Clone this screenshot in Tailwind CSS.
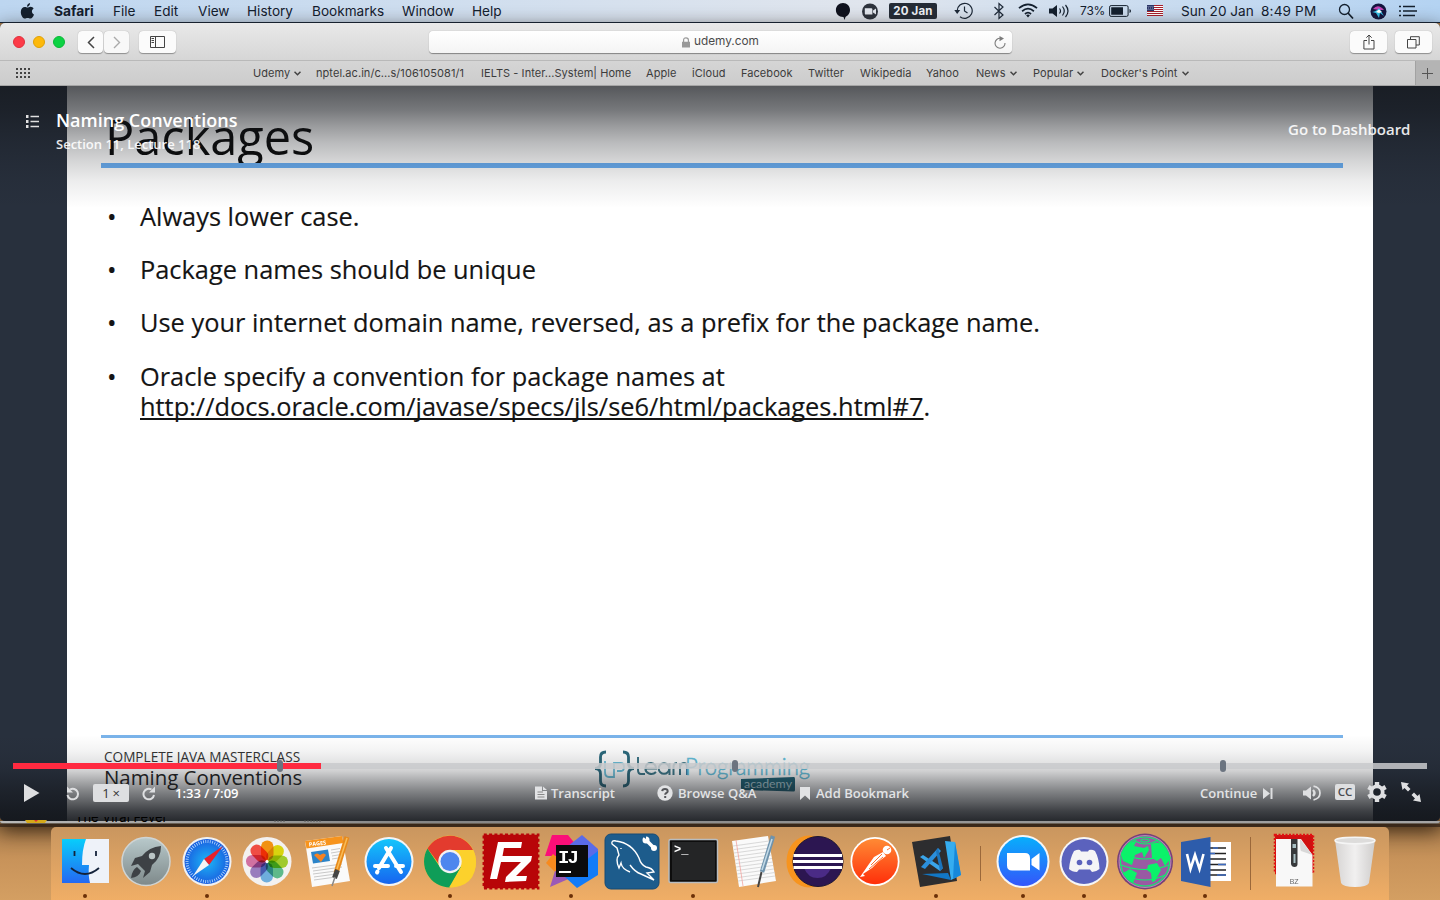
<!DOCTYPE html>
<html lang="en">
<head>
<meta charset="utf-8">
<title>Naming Conventions</title>
<script src="https://cdn.jsdelivr.net/npm/@tailwindcss/browser@4"></script>
</head>
<body class="w-[1440px] h-[900px] overflow-hidden bg-[#cf9c60] font-['Inter','Liberation_Sans',sans-serif]">
<div class="relative w-[1440px] h-[900px] flex flex-col bg-[linear-gradient(to_bottom,#a87c4c_820px,#c8935a_860px,#d49f62_900px)] overflow-hidden">

<!-- Menu bar -->
<header class="h-[23px] shrink-0 flex items-center border-b border-[#17273a] text-[13.6px] text-[#14202e] whitespace-nowrap bg-linear-to-r from-[#bdd6f0] via-[#e0e5ed] via-60% to-[#b4d3f2]">
  <div class="w-[54px] pl-[20px]"><svg width="15" height="18" viewBox="0 0 15 18"><path fill="#14202e" d="M10 1C10.2 3 8.700 4.700 7 4.700 6.800 3 8.300 1.200 10 1ZM7.400 5.600C8.200 5.600 9.200 4.800 10.600 4.800 11.900 4.900 13 5.500 13.600 6.400 11.200 8 11.500 11.300 14 12.400 13.400 14.200 11.900 16.600 10.400 16.600 9.300 16.600 8.900 16 7.600 16 6.300 16 5.900 16.600 4.800 16.600 2.900 16.600.8 13.100.8 9.900.8 6.800 2.800 5 4.800 5 6 5 6.800 5.600 7.400 5.600Z"/></svg></div>
  <span class="w-[59px] font-bold text-[13.8px]">Safari</span><span class="w-[41px]">File</span><span class="w-[44px]">Edit</span><span class="w-[49px]">View</span><span class="w-[65px]">History</span><span class="w-[90px]">Bookmarks</span><span class="w-[70px]">Window</span><span class="w-[363px]">Help</span>
  <div class="w-[27px]"><svg width="16" height="20" viewBox="0 0 16 20"><path fill="#10131f" d="M8 2C12 2 15 5 15 9 15 13 12 15 10.500 16L9.500 19 8.500 16C4 16.200.9 13 .9 9 .9 5 4 2 8 2Z"/></svg></div>
  <div class="w-[27px]"><svg width="17" height="17" viewBox="0 0 17 17"><circle cx="8" cy="8.500" r="8" fill="#2e333d"/><path fill="#e3e7ee" d="M2.800 5.200H9.200Q10.400 5.200 10.400 6.400V11.600H4Q2.800 11.600 2.800 10.400ZM11 7.600 14 5.600V11.400L11 9.400Z"/></svg></div>
  <span class="w-[48px] h-[16px] rounded-[2px] bg-[#252c37] text-[#eef1f6] font-bold text-[11.5px] leading-[16px] text-center tracking-[.2px]">20 Jan</span>
  <div class="w-[56px] pl-[17px]"><svg width="19" height="18" viewBox="0 0 19 18" fill="none" stroke="#1d2938" stroke-width="1.200"><path d="M3.200 9A7.500 7.500 0 1 1 6 14.700" /><path d="M10.500 4.500V9L13.500 11" /><path fill="#1d2938" stroke="none" d="M.3 8H6.200L3.200 12Z"/></svg></div>
  <div class="w-[25px]"><svg width="12" height="18" viewBox="0 0 12 18" fill="none" stroke="#1d2938" stroke-width="1.200"><path d="M1.500 5 10 13 6 16.500V1.500L10 5 1.500 13"/></svg></div>
  <div class="w-[31px] -mt-[2px]"><svg width="20" height="16" viewBox="0 0 21 16" fill="none" stroke="#14202e" stroke-width="1.800"><path d="M1 6Q10.500-2 20 6M4.300 9.300Q10.500 4 16.700 9.300M7.300 12.200Q10.500 9.500 13.700 12.200"/><path fill="#14202e" stroke="none" d="M10.500 16 8.500 13.500Q10.500 12 12.500 13.500Z"/></svg></div>
  <div class="w-[31px]"><svg width="22" height="16" viewBox="0 0 22 16" fill="none" stroke="#14202e" stroke-width="1.200"><path fill="#14202e" stroke="none" d="M0 5.500H3.500L8 2V14L3.500 10.500H0Z"/><path d="M10.500 5.500Q12.500 8 10.500 10.500M13.500 3.500Q17 8 13.500 12.500M16.500 2Q21.500 8 16.500 14"/></svg></div>
  <span class="w-[29px] text-[12px] tracking-[-.2px]">73%</span>
  <div class="w-[38px]"><svg width="23" height="12" viewBox="0 0 23 12"><rect x=".6" y=".6" width="18.500" height="10.800" rx="1.500" fill="none" stroke="#14202e"/><path fill="#14202e" d="M2.200 2.200H14V9.800H2.200ZM20.500 4Q22 4.500 22 6T20.500 8Z"/></svg></div>
  <div class="w-[34px] -mt-[1px]"><svg width="16" height="11" viewBox="0 0 16 11"><path fill="#fff" d="M0 0H16V11H0Z"/><path stroke="#a8202c" d="M0 .5H16M0 2.500H16M0 4.500H16M0 6.500H16M0 8.500H16M0 10.500H16"/><path fill="#2b3768" d="M0 0H7V6H0Z"/><path stroke="#aeb5d6" stroke-width=".7" stroke-dasharray="1 1" d="M.5 1.500H7M1 3H7M.5 4.500H7"/></svg></div>
  <span class="w-[80px]">Sun 20 Jan</span><span class="w-[77px] tracking-[.15px]">8:49 PM</span>
  <div class="w-[32px]"><svg width="16" height="16" viewBox="0 0 16 16" fill="none" stroke="#14202e" stroke-width="1.300"><circle cx="6.500" cy="6.500" r="5"/><path stroke-width="1.700" d="M10 10 15 15.500"/></svg></div>
  <div class="w-[28px]"><svg width="17" height="17" viewBox="0 0 17 17"><circle cx="8.500" cy="8.500" r="8" fill="#151640"/><path fill="#c344b5" d="M3 6Q8 0 14 7L9 7Z"/><path fill="#35bfe8" d="M2 9Q7 8 9 5L14 13 10 10 9 15 6 10Z"/><path fill="#fff" d="M6 9 9 6.500 12 9 9 10Z"/></svg></div>
  <svg width="19" height="12" viewBox="0 0 19 12"><path stroke="#14202e" stroke-width="1.600" d="M1 1.500H3M5 1.500H17M1 6H3M5 6H19M1 10.500H3M5 10.500H17"/></svg>
</header>

<!-- Safari window -->
<section class="relative h-[798px] shrink-0 flex flex-col rounded-t-[5px] rounded-b-[5px] overflow-hidden bg-[#28303d] z-10 shadow-[0_8px_20px_2px_rgba(25,14,4,.8)]">
  <div class="h-[38px] shrink-0 flex items-center border-b border-[#b9b9b9] bg-linear-to-b from-[#e9e9e9] to-[#d6d6d6] pr-[8px] pt-px">
    <div class="flex gap-[8px] pl-[13px] w-[78px]">
      <i class="size-[12px] rounded-full bg-[#fc3b48] border border-[#e0303c]"></i><i class="size-[12px] rounded-full bg-[#fdb90b] border border-[#e0a106]"></i><i class="size-[12px] rounded-full bg-[#0cd243] border border-[#0ab838]"></i>
    </div>
    <div class="flex gap-[1px] w-[61px]">
      <div class="w-[25px] h-[22px] rounded-[4px] bg-[#fbfbfb] shadow-[0_.5px_1px_rgba(0,0,0,.35)] flex items-center justify-center"><svg width="8" height="13" viewBox="0 0 8 13" fill="none" stroke="#444" stroke-width="1.500"><path d="M7 1 1.500 6.500 7 12"/></svg></div>
      <div class="w-[25px] h-[22px] rounded-[4px] bg-[#f8f8f8] shadow-[0_.5px_1px_rgba(0,0,0,.35)] flex items-center justify-center"><svg width="8" height="13" viewBox="0 0 8 13" fill="none" stroke="#aaa" stroke-width="1.400"><path d="M1 1 6.500 6.500 1 12"/></svg></div>
    </div>
    <div class="w-[37px] h-[22px] rounded-[4px] bg-[#fbfbfb] shadow-[0_.5px_1px_rgba(0,0,0,.35)] flex items-center justify-center"><svg width="15" height="12" viewBox="0 0 15 12" fill="none" stroke="#444"><path d="M.5.5H14.500V11.500H.5ZM5.500.5V11.500M1.500 2.500H4M1.500 4.500H4M1.500 6.500H4"/></svg></div>
    <div class="ml-[253px] w-[583px] h-[22px] rounded-[4px] bg-linear-to-b from-white to-[#f4f4f4] shadow-[0_.5px_1px_rgba(0,0,0,.4)] flex items-center">
      <div class="ml-[253px] w-[12px]"><svg width="8" height="11" viewBox="0 0 8 11"><path fill="#999" d="M0 4.800H8V10.500H0Z"/><path fill="none" stroke="#999" stroke-width="1.200" d="M1.600 5V3Q1.600.8 4 .8T6.400 3V5"/></svg></div>
      <span class="w-[300px] text-[11.8px] text-[#4a4a4a]">udemy.com</span>
      <svg width="12" height="13" viewBox="0 0 12 13" fill="none" stroke="#7c7c7c" stroke-width="1.100"><path d="M6.500 2.300A5 5 0 1 0 11 7"/><path fill="#7c7c7c" stroke="none" d="M5.500 0 10 2.400 5.500 5.200Z"/></svg>
    </div>
    <div class="ml-auto flex gap-[8px]">
      <div class="w-[37px] h-[22px] rounded-[4px] bg-[#fbfbfb] shadow-[0_.5px_1px_rgba(0,0,0,.35)] flex items-center justify-center"><svg width="12" height="16" viewBox="0 0 12 16" fill="none" stroke="#444"><path d="M4 6.500H.9V15H11V6.500H8M6 10.500V1M3.300 3.700 6 1 8.700 3.700"/></svg></div>
      <div class="w-[37px] h-[22px] rounded-[4px] bg-[#fbfbfb] shadow-[0_.5px_1px_rgba(0,0,0,.35)] flex items-center justify-center"><svg width="13" height="13" viewBox="0 0 13 13" fill="none" stroke="#444"><path d="M.5 3.500H9V12H.5ZM3.500 3.500V.7H12.300V9H9"/></svg></div>
    </div>
  </div>
  <nav class="h-[25px] shrink-0 flex items-center border-b border-[#a5a5a5] bg-linear-to-b from-[#d5d5d5] to-[#cccccc] text-[11px] tracking-[.06px] text-[#3c3c3c] whitespace-nowrap">
    <div class="w-[253px] pl-[16px]"><svg width="15" height="10" viewBox="0 0 15 10"><path stroke="#444" stroke-width="2" stroke-dasharray="2 2" d="M0 1H15M0 5H15M0 9H15"/></svg></div>
    <span class="w-[63px] flex items-center gap-[4px]">Udemy<svg width="7" height="5" viewBox="0 0 7 5" fill="none" stroke="#444" stroke-width="1.500"><path d="M.5.7 3.500 3.700 6.500.7"/></svg></span>
    <span class="w-[165px]">nptel.ac.in/c...s/106105081/1</span><span class="w-[165px]">IELTS - Inter...System| Home</span><span class="w-[46px]">Apple</span><span class="w-[49px]">iCloud</span><span class="w-[67px]">Facebook</span><span class="w-[52px]">Twitter</span><span class="w-[66px]">Wikipedia</span><span class="w-[50px]">Yahoo</span>
    <span class="w-[57px] flex items-center gap-[4px]">News<svg width="7" height="5" viewBox="0 0 7 5" fill="none" stroke="#444" stroke-width="1.500"><path d="M.5.7 3.500 3.700 6.500.7"/></svg></span>
    <span class="w-[68px] flex items-center gap-[4px]">Popular<svg width="7" height="5" viewBox="0 0 7 5" fill="none" stroke="#444" stroke-width="1.500"><path d="M.5.7 3.500 3.700 6.500.7"/></svg></span>
    <span class="flex items-center gap-[4px]">Docker's Point<svg width="7" height="5" viewBox="0 0 7 5" fill="none" stroke="#444" stroke-width="1.500"><path d="M.5.7 3.500 3.700 6.500.7"/></svg></span>
    <div class="ml-auto w-[25px] h-full bg-[#b4b4b4] border-l border-[#a2a2a2] flex items-center justify-center pr-[2px]"><svg width="11" height="11" viewBox="0 0 11 11"><path stroke="#555" d="M5.500 0V11M0 5.500H11"/></svg></div>
  </nav>

  <main class="relative h-[735px] px-[67px] bg-[#28303d] font-['Open_Sans','Noto_Sans',sans-serif]">
    <!-- Slide -->
    <article class="h-full bg-white text-[#0a0a0a] pl-[34px] pr-[30px] flex flex-col whitespace-nowrap">
      <h1 class="h-[77px] pl-[4px] pt-[17px] text-[48.700px] leading-[66px] overflow-hidden">Packages</h1>
      <div class="h-[5px] bg-[#6aaff4] shrink-0"></div>
      <ul class="pt-[33px] h-[567px] shrink-0 text-[25.380px] leading-[30px] text-[#141414] [-webkit-text-stroke:.15px_#141414]">
        <li class="flex h-[53px]"><span class="w-[39px] pl-[6px]">•</span>Always lower case.</li>
        <li class="flex h-[53px]"><span class="w-[39px] pl-[6px]">•</span>Package names should be unique</li>
        <li class="flex h-[54px]"><span class="w-[39px] pl-[6px]">•</span>Use your internet domain name, reversed, as a prefix for the package name.</li>
        <li class="flex"><span class="w-[39px] pl-[6px]">•</span><span>Oracle specify a convention for package names at<br><span class="underline decoration-[1.500px] underline-offset-[2px] [text-decoration-skip-ink:none]">http://docs.oracle.com/javase/specs/jls/se6/html/packages.html#7</span>.</span></li>
      </ul>
      <div class="h-[3px] bg-[#7ab3ea] shrink-0"></div>
      <footer class="flex pl-[3px]">
        <div class="w-[491px] pt-[10px]">
          <p class="text-[13.600px] leading-[18px] text-[#333]">COMPLETE JAVA MASTERCLASS</p>
          <p class="text-[20.400px] leading-[22px] text-[#222]">Naming Conventions</p>
        </div>
        <svg class="mt-[10px]" width="220" height="48" viewBox="0 0 220 48" fill="none">
          <path stroke="#2b6a7d" stroke-width="2.800" d="M11 4Q5.500 4 5.500 9V15Q5.500 20.500 0 20.500 5.500 20.500 5.500 26V33Q5.500 38 11 38M28 4Q33.500 4 33.500 9V15Q33.500 20.500 39 20.500 33.500 20.500 33.500 26V33Q33.500 38 28 38"/>
          <path stroke="#6cc0da" stroke-width="1.800" d="M10 13V24Q10 29 14 29H19V15H26Q29 15 29 19T26 23H22"/>
          <g fill="none" stroke-width="2"><path stroke="#3c7687" d="M43 9V22Q43 26 46 26H50M61 24Q58 27 54 25.500 50 24 50.500 20 51 15 56 15 61 15.500 61 20.500H51"/><circle cx="69" cy="20.500" r="5.300" stroke="#3c7687"/><path stroke="#3c7687" d="M74.500 15V27M78.500 27V19Q78.500 15 82 15M85 27V15M85 19Q86 15 89 15 92 15 92 19V27"/></g>
          <text x="90" y="27" font-family="Lato" font-weight="300" font-size="24" textLength="125" lengthAdjust="spacingAndGlyphs" fill="#63c0dc" stroke="#63c0dc" stroke-width=".5">Programming</text>
          <path fill="#1f6478" d="M146 31 199 29Q200 29 200 31V42Q200 44 198 43.500L148 42Q146 42 146 40Z"/>
          <text x="149" y="39.500" font-family="Lato" font-size="12" textLength="48" lengthAdjust="spacingAndGlyphs" fill="#b4d3dc">academy</text>
        </svg>
      </footer>
    </article>

    <!-- Player overlay -->
    <div class="absolute inset-0 flex flex-col justify-between text-white/90 font-semibold whitespace-nowrap">
      <div class="h-[124px] pt-[21px] flex items-start bg-[linear-gradient(to_bottom,rgba(20,23,28,.72)_0px,rgba(20,23,28,.58)_24px,rgba(20,23,28,.43)_40px,rgba(20,23,28,.29)_57px,rgba(20,23,28,.18)_75px,rgba(20,23,28,.08)_95px,rgba(20,23,28,0)_122px)]">
        <div class="w-[56px] pl-[26px] pt-[8px]"><svg width="13" height="13" viewBox="0 0 13 13"><path stroke="#e0e0e0" stroke-width="1.300" d="M4.500 1.500H13M4.500 6.500H13M4.500 11.500H13"/><path stroke="#e0e0e0" stroke-width="3" d="M0 1.500H2.500M0 6.500H2.500M0 11.500H2.500"/></svg></div>
        <div class="w-[1232px]">
          <p class="text-[18px] leading-[26px] text-white">Naming Conventions</p>
          <p class="text-[13px] leading-[22px]">Section 11, Lecture 118</p>
        </div>
        <a class="pt-[11px] text-[15px] leading-[22px]">Go to Dashboard</a>
      </div>
      <div class="h-[90px] px-[13px] pt-[32px] bg-[linear-gradient(to_bottom,rgba(20,23,28,0)_4px,rgba(20,23,28,.05)_20px,rgba(20,23,28,.12)_32px,rgba(20,23,28,.2)_40px,rgba(20,23,28,.37)_50px,rgba(20,23,28,.53)_60px,rgba(20,23,28,.67)_70px,rgba(20,23,28,.82)_80px,rgba(20,23,28,.92)_90px)]">
        <div class="relative h-[6px] bg-[#c9cacd]/85">
          <div class="h-full w-[308px] bg-[#ff2a40]"></div>
          <i class="absolute left-[264px] -top-[3px] w-[6px] h-[12px] rounded-[3px] bg-[#6b7480]"></i>
          <i class="absolute left-[719px] -top-[3px] w-[6px] h-[12px] rounded-[3px] bg-[#6b7480]"></i>
          <i class="absolute left-[1207px] -top-[3px] w-[6px] h-[12px] rounded-[3px] bg-[#6b7480]"></i>
        </div>
        <div class="mt-[14px] h-[20px] flex items-center text-[13px] leading-[20px] text-[#e2e3e5]">
          <div class="w-[53px] pl-[11px]"><svg width="16" height="18" viewBox="0 0 16 18"><path fill="#dedfe1" d="M0 0 15.500 9 0 18Z"/></svg></div>
          <div class="w-[27px]"><svg width="14" height="15" viewBox="0 0 14 15" fill="none" stroke="#dedfe1" stroke-width="2"><path d="M4 3.500A5.300 5.300 0 1 1 1.500 9"/><path fill="#dedfe1" stroke="none" d="M1 .5V6.500H7Z"/></svg></div>
          <div class="w-[36px] h-[18px] rounded-[2px] bg-[#dedfe1] text-[#333] text-center text-[13px] leading-[18px] font-medium tracking-[-.3px]">1 ×</div>
          <div class="w-[46px] pl-[13px]"><svg width="14" height="15" viewBox="0 0 14 15" fill="none" stroke="#dedfe1" stroke-width="2"><path d="M9.500 3.500A5.300 5.300 0 1 0 12 9"/><path fill="#dedfe1" stroke="none" d="M13 .5V6.500H7Z"/></svg></div>
          <span class="w-[360px] text-white">1:33 / 7:09</span>
          <div class="w-[16px]"><svg width="12" height="14" viewBox="0 0 12 14"><path fill="#e2e3e5" d="M0 .5H7V5H12V13.500H0ZM8 .5 12 4H8Z"/><path stroke="#888" d="M2.500 6H8M2.500 8.500H9.500M2.500 11H9.500"/></svg></div>
          <span class="w-[106px]">Transcript</span>
          <div class="w-[21px]"><svg width="16" height="16" viewBox="0 0 16 16"><circle cx="8" cy="8" r="7.700" fill="#e2e3e5"/><path fill="none" stroke="#55565a" stroke-width="2" d="M5.200 6.200Q5.400 4 8 4T10.700 6.200Q10.700 7.200 9.200 8 8.200 8.600 8.200 9.800M8.200 11V13"/></svg></div>
          <span class="w-[122px]">Browse Q&amp;A</span>
          <div class="w-[16px]"><svg width="10" height="13" viewBox="0 0 10 13"><path fill="#e2e3e5" d="M0 0H10V13L5 8.500 0 13Z"/></svg></div>
          <span class="w-[384px]">Add Bookmark</span>
          <span class="w-[63px]">Continue</span>
          <div class="w-[40px]"><svg width="10" height="11" viewBox="0 0 10 11"><path fill="#dedfe1" d="M0 0 7 5.500 0 11ZM7.500 0H9.500V11H7.500Z"/></svg></div>
          <div class="w-[32px]"><svg width="19" height="16" viewBox="0 0 19 16" fill="none" stroke="#dedfe1" stroke-width="1.700"><path fill="#dedfe1" stroke="none" d="M0 5.500H3L8 1.500V14.500L3 10.500H0Z"/><path stroke-width="2.400" d="M10 5Q13 8 10 11"/><path d="M10.500 1.200Q17 2.500 17 8T10.500 14.800"/></svg></div>
          <div class="w-[32px] -mt-[3px]"><div class="w-[20px] h-[16px] rounded-[2px] bg-[#dedfe1] text-[#4a4b50] text-center text-[11.5px] leading-[16px] font-semibold">CC</div></div>
          <div class="w-[34px] -mt-[3px]"><svg width="20" height="20" viewBox="0 0 20 20" fill="none" stroke="#dedfe1"><circle cx="10" cy="10" r="5.700" stroke-width="3.800"/><path stroke-width="4.400" d="M10 0V3.500M10 16.500V20M1.400 5 4.500 6.800M15.500 13.200 18.600 15M1.400 15 4.500 13.200M15.500 6.800 18.600 5"/></svg></div>
          <svg class="-mt-[2px]" width="20" height="20" viewBox="0 0 20 20"><path fill="#dedfe1" d="M0 0 8 1.500 6 3.500 9.500 7 7 9.500 3.500 6 1.500 8ZM20 20 12 18.500 14 16.500 10.500 13 13 10.500 16.500 14 18.500 12Z"/></svg>
        </div>
      </div>
    </div>
  </main>
</section>

<!-- Edge of the window behind -->
<div class="relative z-20 h-[3px] shrink-0 rounded-b-[4px] bg-linear-to-r from-[#b9b9b9] via-[#858585] via-30% to-[#a5a5a5] flex items-end pl-[25px] border-b border-[#6a6055]">
  <div class="w-[50px]"><svg width="22" height="3"><path fill="#d5aa1a" d="M0 0H22L20 3H2Z"/><path fill="#d33" d="M9 0H13L11 2Z"/></svg></div>
  <span class="w-[197px] h-[6px] overflow-hidden text-[13px] text-black flex items-end"><span class="leading-[12px]">The Viral Fever</span></span>
  <svg width="70" height="3"><path stroke="#555" stroke-dasharray="2 1" d="M2 1H14M32 1H50"/></svg>
</div>
<div class="relative z-10 h-[3px] shrink-0 bg-[#2e2015]/70"></div>

<!-- Dock -->
<footer class="relative z-20 ml-[51px] w-[1338px] h-[73px] shrink-0 rounded-t-[5px] bg-linear-to-b from-[#c9965f] to-[#f0ae66] pt-[4px] pl-[3.600px] flex">
  <div class="w-[60.800px] flex flex-col items-center gap-[3px]"><svg width="60" height="60" viewBox="0 0 60 60"><defs><linearGradient id="fb" x2="0" y2="1"><stop stop-color="#08cdfb"/><stop offset="1" stop-color="#2468f2"/></linearGradient></defs><path fill="url(#fb)" d="M7 8H54V52H7Z"/><path fill="#eef2f9" d="M31 8H54V52H35Q33 44 34 34H27Q27 18 31 8Z"/><path fill="none" stroke="#14233b" stroke-width="1.800" d="M19.500 20V25M41 20V25M16 37Q30 49 44 37"/></svg><i class="size-[4px] rounded-full bg-[#6b3008]"></i></div>
  <div class="w-[60.800px] flex justify-center"><svg width="60" height="60" viewBox="0 0 60 60"><defs><linearGradient id="lp" x2="0" y2="1"><stop stop-color="#b8c9cb"/><stop offset="1" stop-color="#7e898a"/></linearGradient></defs><circle cx="30" cy="30.500" r="24" fill="url(#lp)" stroke="#cfd4d4" stroke-width="1.500"/><path fill="#3d4145" d="M45 15Q33 16 26 25L19 27 15 35 22 33 29 40 27 47 34 41 36 34Q45 27 45 15ZM21 36 25 40Q23 46 15 47 16 39 21 36Z"/><circle cx="36" cy="25" r="3.200" fill="#b9c4c5"/></svg></div>
  <div class="w-[60.800px] flex flex-col items-center gap-[3px]"><svg width="60" height="60" viewBox="0 0 60 60"><defs><radialGradient id="sf"><stop stop-color="#1cb6f6"/><stop offset="1" stop-color="#1a5fe0"/></radialGradient></defs><circle cx="30" cy="30.500" r="24.500" fill="#f0f1f3"/><circle cx="30" cy="30.500" r="22.500" fill="url(#sf)"/><circle cx="30" cy="30.500" r="20" fill="none" stroke="#b9dcff" stroke-width="3" stroke-dasharray=".8 1.500"/><path fill="#e8202c" d="M46 15 27 28 32 34Z"/><path fill="#f4f4f4" d="M16 45 27 28 32 34Z"/></svg><i class="size-[4px] rounded-full bg-[#6b3008]"></i></div>
  <div class="w-[60.800px] flex justify-center"><svg width="60" height="60" viewBox="0 0 60 60"><circle cx="30" cy="30.500" r="24.500" fill="#f3f1f0"/><g class="*:mix-blend-multiply"><rect x="24" y="9.500" width="12.500" height="20" rx="6.200" fill="#fd9a14"/><rect x="24" y="9.500" width="12.500" height="20" rx="6.200" fill="#e3e010" transform="rotate(45 30 30.500)"/><rect x="24" y="9.500" width="12.500" height="20" rx="6.200" fill="#a8d62e" transform="rotate(90 30 30.500)"/><rect x="24" y="9.500" width="12.500" height="20" rx="6.200" fill="#62c493" transform="rotate(135 30 30.500)"/><rect x="24" y="9.500" width="12.500" height="20" rx="6.200" fill="#73b7ea" transform="rotate(180 30 30.500)"/><rect x="24" y="9.500" width="12.500" height="20" rx="6.200" fill="#a184c9" transform="rotate(225 30 30.500)"/><rect x="24" y="9.500" width="12.500" height="20" rx="6.200" fill="#dc78ab" transform="rotate(270 30 30.500)"/><rect x="24" y="9.500" width="12.500" height="20" rx="6.200" fill="#fb5148" transform="rotate(315 30 30.500)"/></g><circle cx="30" cy="30.500" r="1.500" fill="#fff"/></svg></div>
  <div class="w-[60.800px] flex justify-center"><svg width="60" height="60" viewBox="0 0 60 60"><path fill="#fafafa" d="M7 10 44 5 52 50 14 56Z"/><path fill="#f7941d" d="M7 10 44 5 45.500 12 8.500 17.500Z"/><text x="11" y="15.500" font-family="Open Sans" font-weight="700" font-size="5.500" fill="#fff" transform="rotate(-7 11 15.500)">PAGES</text><path fill="#2c84c8" d="M13 21 30 18.500 32 30 15 32.500Z"/><path fill="#f58220" d="M16 24Q19 21 22 24 26 21 28 24L23 31Z"/><path stroke="#bbb" stroke-width=".8" d="M33 19 42 17.500M33 22 42 20.500M34 25 43 23.500M34 28 43 26.500M14 37 44 33M15 40 44 36M15 43 38 40M16 46 38 43M16 49 38 46"/><path stroke="#e88a1a" stroke-width="5" d="M49 6 38 42"/><path stroke="#f9bc57" stroke-width="1.500" d="M49 7 39 38"/><path stroke="#444" stroke-width="5" d="M39.500 39 36.500 47"/><path stroke="#888" stroke-width="1.500" d="M37 46 34 55"/></svg></div>
  <div class="w-[60.800px] flex justify-center"><svg width="60" height="60" viewBox="0 0 60 60"><defs><linearGradient id="as" x2="0" y2="1"><stop stop-color="#14c5fb"/><stop offset="1" stop-color="#1664f0"/></linearGradient></defs><circle cx="30" cy="30.500" r="24.500" fill="#f3f5f7"/><circle cx="30" cy="30.500" r="22.500" fill="url(#as)"/><path fill="none" stroke="#fff" stroke-width="4" stroke-linecap="round" d="M32 17 20 37M27 17 42 41M16 35H29M37 35H44M18.500 40.500 18 41.500"/></svg></div>
  <div class="w-[60.800px] flex flex-col items-center gap-[3px]"><svg width="60" height="60" viewBox="0 0 60 60"><circle cx="30" cy="30.500" r="26" fill="#fcd12c"/><path fill="#0f9d58" d="M7.500 17.500A26 26 0 0 0 30 56.500L41 36 20 36Z"/><path fill="#fcd12c" d="M41 36 29 56.500Q56 56 56 30 56 24 53 19H33Z"/><path fill="#e33b2e" d="M7.500 17.500A26 26 0 0 1 53 19H30Q21 20 19 33Z"/><circle cx="30" cy="30.500" r="11.700" fill="#f2f2f2"/><circle cx="30" cy="30.500" r="9.500" fill="#4d86ee"/></svg><i class="size-[4px] rounded-full bg-[#6b3008]"></i></div>
  <div class="w-[60.800px] flex justify-center"><svg width="60" height="60" viewBox="0 0 60 60"><path fill="#b80508" stroke="#b80508" stroke-width="2.500" stroke-dasharray="3 2.300" d="M2.800 3.800H57.200V57.200H2.800Z"/><path fill="#b80508" d="M3.500 4.500H56.500V56.500H3.500Z"/><path fill="#fff" d="M17 11H41L40 17H23L21.500 25H33L32 31H20L16 48H9Z"/><path fill="#fff" d="M32 25H51L50 30 35 45H46L45 50 24 51 25 46 40 31H31Z"/></svg></div>
  <div class="w-[60.800px] flex flex-col items-center gap-[3px]"><svg width="60" height="60" viewBox="0 0 60 60"><path fill="#fb0f78" d="M11 4H27L40 20 20 25H4Z"/><path fill="#f78a1e" d="M12 23 5 32 16 43 20 30Z"/><path fill="#9b59b6" d="M14 40 9 56 32 46Z"/><path fill="#5a6be8" d="M27 15 41 4 57 18V30H40Z"/><path fill="#137cf8" d="M57 20V44L36 57 24 46 44 30Z"/><path fill="#0b0b0c" d="M15 14H47V46H15Z"/><text x="17" y="32" font-family="Liberation Mono" font-weight="700" font-size="19" textLength="21" fill="#fff">IJ</text><path fill="#fff" d="M18 40H30V42H18Z"/></svg><i class="size-[4px] rounded-full bg-[#6b3008]"></i></div>
  <div class="w-[60.800px] flex justify-center"><svg width="60" height="60" viewBox="0 0 60 60"><rect x="3" y="3" width="54" height="55" rx="6" fill="#1d5c8c" stroke="#174b75"/><path fill="none" stroke="#fff" stroke-width="1.400" d="M10 13Q9 9 14 10 30 12 37 27 39 34 44 36 50 37 52 41L45 42 52 49 39 43Q33 41 28 34M28 41Q20 38 19 32L17 37Q13 28 17 24L15 17 10 13M19 17V18"/><path stroke="#fff" stroke-width="3.500" d="M44 9 52 17"/><circle cx="44" cy="9" r="3.500" fill="#fff"/><circle cx="52" cy="17" r="3" fill="#fff"/><path fill="#1d5c8c" d="M40 5 44 8 44 4Z"/></svg></div>
  <div class="w-[60.800px] flex flex-col items-center gap-[3px]"><svg width="60" height="60" viewBox="0 0 60 60"><rect x="6" y="8.500" width="48.500" height="43" rx="1.500" fill="#0d0d0d" stroke="#b8bcbf" stroke-width="1.500"/><path fill="#242526" d="M9 11H52V49H9Z"/><text x="11" y="22" font-family="Liberation Mono" font-weight="700" font-size="12" fill="#fff">&gt;_</text></svg><i class="size-[4px] rounded-full bg-[#6b3008]"></i></div>
  <div class="w-[60.800px] flex justify-center"><svg width="60" height="60" viewBox="0 0 60 60"><path fill="#fafafa" d="M8 10 44 5 52 50 15 56Z"/><path stroke="#cfcfcf" stroke-width=".8" d="M9 15 45 10M10 18.500 46 13.500M10 22 46 17M11 25.500 47 20.500M11 29 47 24M12 32.500 48 27.500M12 36 49 31M13 39.500 49 34.500M13 43 50 38M14 46.500 51 41.500M14 50 51 45"/><path stroke="#f2a5a0" stroke-width=".8" d="M12 9 19 55"/><path stroke="#6f93ad" stroke-width="4.500" d="M49 5 38 41"/><path stroke="#c4dbe8" stroke-width="1.500" d="M48 8 38 39"/><path stroke="#444" stroke-width="2" d="M37.500 41 34 56"/></svg></div>
  <div class="w-[60.800px] flex justify-center"><svg width="60" height="60" viewBox="0 0 60 60"><ellipse cx="24" cy="30.500" rx="22.500" ry="26" fill="#f7941e"/><circle cx="33" cy="30.500" r="25" fill="#2c1651" stroke="#1d1633"/><path fill="#4a2b86" d="M19 37H46Q42 47 32.500 47T19 37Z"/><path stroke="#fff" stroke-width="2.800" d="M8.500 24.500H57M8 30.500H58M8.500 36.500H57"/></svg></div>
  <div class="w-[60.800px] flex justify-center"><svg width="60" height="60" viewBox="0 0 60 60"><defs><linearGradient id="pm" x2="0" y2="1"><stop stop-color="#ff8a34"/><stop offset="1" stop-color="#ff2f0a"/></linearGradient></defs><circle cx="30" cy="30.500" r="24.500" fill="#fff"/><circle cx="30" cy="30.500" r="22.800" fill="url(#pm)"/><circle cx="42" cy="19" r="4.300" fill="#fff"/><path fill="#fff" d="M38 21 41 25 33 31 27 37 18 43 20 45 15 46 24 33 29 26Z"/><path stroke="#ff7030" stroke-width="1" d="M37 23 26 34M38 26 24 38M42 19 45 17"/></svg></div>
  <div class="w-[60.800px] flex flex-col items-center gap-[3px]"><svg width="60" height="60" viewBox="0 0 60 60"><path fill="#2d2d2f" d="M6 11 44 5 51 50 14 56Z"/><path fill="#1277c4" d="M16 43 42 42 45 49Z"/><path fill="#35adf0" d="M39 10 49 11 55 44 45 49Z"/><path fill="#1688da" d="M49 11 55 44 47 48Z"/><path fill="#3aa5ea" d="M14 26 17 24 37 37 34 40Z"/><path fill="#2b8fdc" d="M15 36 32 17 35 20 19 38Z"/><path fill="#1b75bd" d="M32 17 37 37 34 40 30 20Z"/></svg><i class="size-[4px] rounded-full bg-[#6b3008]"></i></div>
  <div class="w-[26px] pl-[13px] pt-[15px]"><div class="w-px h-[35px] bg-[#9b683a]"></div></div>
  <div class="w-[60.800px] flex flex-col items-center gap-[3px]"><svg width="60" height="60" viewBox="0 0 60 60"><defs><linearGradient id="zm" x2="0" y2="1"><stop stop-color="#08aefc"/><stop offset="1" stop-color="#3456fa"/></linearGradient></defs><circle cx="30" cy="30.500" r="26.500" fill="#f6f6f6"/><circle cx="30" cy="30.500" r="24.500" fill="url(#zm)"/><path fill="#fff" d="M14 22H32Q37 22 37 27V39.500H19Q14 39.500 14 34.500ZM38.500 28 46.500 22V39.500L38.500 34Z"/></svg><i class="size-[4px] rounded-full bg-[#6b3008]"></i></div>
  <div class="w-[60.800px] flex flex-col items-center gap-[3px]"><svg width="60" height="60" viewBox="0 0 60 60"><circle cx="30" cy="30.500" r="24.500" fill="#f6f6f6"/><circle cx="30" cy="30.500" r="22.500" fill="#5b62bd"/><path fill="#f4f4f6" d="M20 20Q24 18 26 19L27 20.500H34L35 19Q38 18 41 20 45 27 45.500 38 42 41 38 41L36 38.500H25L23 41Q18 41 15 38 16 27 20 20Z"/><circle cx="25.500" cy="31.500" r="2.800" fill="#5b62bd"/><circle cx="35.500" cy="31.500" r="2.800" fill="#5b62bd"/></svg><i class="size-[4px] rounded-full bg-[#6b3008]"></i></div>
  <div class="w-[60.800px] flex flex-col items-center gap-[3px]"><svg width="60" height="60" viewBox="0 0 60 60"><circle cx="30" cy="30.500" r="28" fill="#774078"/><circle cx="30" cy="30.500" r="26" fill="#995aa3" stroke="#b886b6"/><path fill="#0bf26a" d="M10 16Q18 8 21 11L19 15 29 17 33 15 34 19 29 27 27 21 20 24 17 34 8 30Q5 23 10 16ZM36 13Q44 9 49 15L56 27 50 35 46 27 42 30 37 27ZM8 42 15 38 22 42 18 52Q11 49 8 42ZM33 34 42 32 46 39 40 50 37 51 36 42 32 39Z"/><g fill="none" stroke="#0bf26a" stroke-width="1.200"><circle cx="30" cy="30.500" r="24.500"/><ellipse cx="30" cy="9.500" rx="4" ry="1.500"/><path d="M19 9Q30 17 43 9M6 22Q30 34 54 22M6 34Q30 43 54 34M10 44Q30 54 50 44"/></g></svg><i class="size-[4px] rounded-full bg-[#6b3008]"></i></div>
  <div class="w-[60.800px] flex flex-col items-center gap-[3px]"><svg width="60" height="60" viewBox="0 0 60 60"><path fill="#fff" d="M30 11H56V50H30Z"/><path stroke="#222" stroke-width="1.700" d="M35 17H51M35 22.500H51M35 28H51M35 33.500H51M35 39H51M35 44H51"/><path stroke="#3e6bc0" stroke-width="1.700" d="M38 17H43M35 22.500H40M43 33.500H51M42 44H51"/><path fill="#2d5cab" d="M6 11 35.500 6V56L6 50Z"/><path fill="none" stroke="#fff" stroke-width="2.600" d="M12 23 15.500 38 20 24 24.500 38 28.500 23"/></svg><i class="size-[4px] rounded-full bg-[#6b3008]"></i></div>
  <div class="w-[27px] pl-[14px] pt-[6px]"><div class="w-px h-[53px] bg-[#9b683a]"></div></div>
  <div class="w-[60.800px] flex justify-center"><svg width="60" height="60" viewBox="0 0 60 60"><path fill="#d01010" stroke="#e01212" stroke-width="2.500" stroke-dasharray="2 1.500" d="M12 4H50V42H12Z"/><path fill="#f8f8f8" d="M13 8H38L49.500 24V55.500H13Z"/><path fill="#d8d8d8" d="M37 8Q37 19 38 20L49.500 24Z"/><path fill="#37393b" d="M28 8H34.500V33Q34.500 36 31.500 36T28 33Z"/><path fill="#a9c0c4" d="M29.500 13H33V17H29.500ZM30.500 23H32.500V32H30.500Z"/><text x="31" y="52.500" text-anchor="middle" font-family="Open Sans" font-size="7.500" fill="#666">BZ</text></svg></div>
  <div class="w-[60.800px] flex justify-center"><svg width="60" height="60" viewBox="0 0 60 60"><defs><linearGradient id="tr"><stop stop-color="#d6d4d3"/><stop offset=".5" stop-color="#f1f0f0"/><stop offset="1" stop-color="#cfcdcc"/></linearGradient></defs><path fill="url(#tr)" d="M11 9 17 52Q19 56 31 56T45 52L51 9Z"/><ellipse cx="31" cy="9.500" rx="20" ry="3.300" fill="#dddcdb" stroke="#f5f5f5" stroke-width="1.500"/></svg></div>
</footer>
</div>
</body>
</html>
